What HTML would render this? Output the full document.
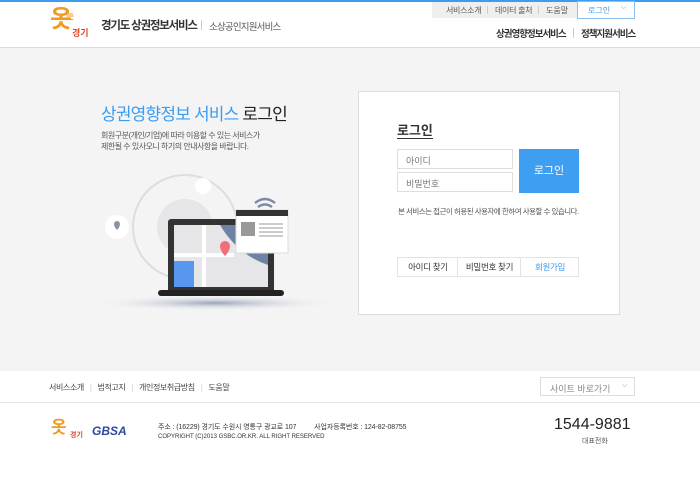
<!DOCTYPE html>
<html><head><meta charset="utf-8"><style>
*{margin:0;padding:0;box-sizing:border-box}
body{width:700px;height:489px;position:relative;background:#fff;font-family:"Liberation Sans","Noto Sans CJK KR",sans-serif;color:#333;overflow:hidden}
.a{position:absolute;white-space:nowrap}
</style></head><body>
<div class="a" style="left:0;top:0;width:700px;height:2px;background:#3b9cf0"></div>
<div class="a" style="left:0;top:47px;width:700px;height:324px;background:#f4f4f5;border-top:1px solid #d8dbe0"></div>
<!-- util -->
<div class="a" style="left:432px;top:2px;width:145px;height:16px;background:#efefef"></div>
<div class="a" style="left:446px;top:5px;font-size:8px;color:#555;letter-spacing:-0.3px">서비스소개</div>
<div class="a" style="left:487px;top:6px;width:1px;height:8px;background:#ccc"></div>
<div class="a" style="left:495px;top:5px;font-size:8px;color:#555;letter-spacing:-0.3px">데이터 출처</div>
<div class="a" style="left:538px;top:6px;width:1px;height:8px;background:#ccc"></div>
<div class="a" style="left:546px;top:5px;font-size:8px;color:#555">도움말</div>
<div class="a" style="left:577px;top:1px;width:58px;height:18px;border:1px solid #8cc0f0;background:#fff"></div>
<div class="a" style="left:588px;top:5px;font-size:8px;color:#3b9cf0">로그인</div>
<div class="a" style="left:621px;top:4px;font-size:7px;color:#3b9cf0">⌵</div>
<!-- logo -->
<div class="a" style="left:50px;top:8px;font-size:24px;font-weight:bold;color:#f39a1e;line-height:24px">옷</div>
<div class="a" style="left:66px;top:9px;font-size:9px;font-weight:bold;color:#f39a1e">는</div>
<div class="a" style="left:72px;top:26px;font-size:9px;font-weight:bold;color:#e0482a">경기</div>
<div class="a" style="left:101px;top:17px;font-size:11.5px;font-weight:bold;color:#333;letter-spacing:-1.2px">경기도 상권정보서비스</div>
<div class="a" style="left:201px;top:20px;width:1px;height:10px;background:#ccc"></div>
<div class="a" style="left:209px;top:19px;font-size:9.5px;color:#555;letter-spacing:-0.8px">소상공인지원서비스</div>
<div class="a" style="left:496px;top:26px;font-size:9.5px;font-weight:bold;color:#333;letter-spacing:-1px">상권영향정보서비스</div>
<div class="a" style="left:573px;top:28px;width:1px;height:10px;background:#ccc"></div>
<div class="a" style="left:581px;top:26px;font-size:9.5px;font-weight:bold;color:#333;letter-spacing:-1px">정책지원서비스</div>
<!-- left -->
<div class="a" style="left:101px;top:100px;font-size:17px;color:#3b9cf0;letter-spacing:-0.8px">상권영향정보 서비스 <span style="color:#222">로그인</span></div>
<div class="a" style="left:101px;top:130px;font-size:8px;color:#555;line-height:11px;letter-spacing:-0.5px">회원구분(개인/기업)에 따라 이용할 수 있는 서비스가<br>제한될 수 있사오니 하기의 안내사항을 바랍니다.</div>
<svg class="a" style="left:90px;top:165px" width="255" height="150">
<defs><radialGradient id="s"><stop offset="0" stop-color="#9aa5b8"/><stop offset="1" stop-color="#f4f4f5" stop-opacity="0"/></radialGradient></defs>
<ellipse cx="125" cy="138" rx="125" ry="8" fill="url(#s)"/>
<circle cx="95" cy="62" r="52" fill="none" stroke="#ddd" stroke-width="2"/>
<circle cx="95" cy="62" r="28" fill="#e6e6e8"/>
<circle cx="27" cy="62" r="12" fill="#fff"/><path d="M27 56a3 3 0 0 1 3 3c0 3-3 6-3 6s-3-3-3-6a3 3 0 0 1 3-3z" fill="#8a94a6"/>
<circle cx="113" cy="21" r="8" fill="#fff"/>
<path d="M165 38q10-8 20 0M168 42q7-5 14 0" stroke="#7d89a8" stroke-width="2.5" fill="none"/>
<rect x="78" y="54" width="106" height="74" rx="3" fill="#333"/>
<rect x="84" y="60" width="94" height="62" fill="#e6e6e8"/>
<path d="M130 60h48v40q-30-10-48-40z" fill="#6f82a6"/>
<path d="M84 96h20v26h-20z" fill="#5897f0"/>
<path d="M84 90h60M114 60v62" stroke="#fff" stroke-width="4"/>
<path d="M135 76a5 5 0 0 1 5 5c0 5-5 10-5 10s-5-5-5-10a5 5 0 0 1 5-5z" fill="#f0707a"/>
<rect x="68" y="125" width="126" height="6" rx="3" fill="#222"/>
<rect x="146" y="45" width="52" height="43" fill="#fff" stroke="#ddd"/>
<rect x="146" y="45" width="52" height="6" fill="#333"/>
<rect x="151" y="57" width="14" height="14" fill="#999"/>
<path d="M169 59h24M169 63h24M169 67h24M169 71h24" stroke="#999"/>
</svg>
<!-- login box -->
<div class="a" style="left:358px;top:91px;width:262px;height:224px;background:#fff;border:1px solid #ddd"></div>
<div class="a" style="left:397px;top:124px;font-size:13px;font-weight:bold;color:#333;border-bottom:1px solid #333;line-height:14px">로그인</div>
<div class="a" style="left:397px;top:149px;width:116px;height:20px;border:1px solid #ddd;background:#fff;font-size:9px;color:#777;padding:4px 0 0 8px">아이디</div>
<div class="a" style="left:397px;top:172px;width:116px;height:20px;border:1px solid #ddd;background:#fff;font-size:9px;color:#777;padding:4px 0 0 8px">비밀번호</div>
<div class="a" style="left:519px;top:149px;width:60px;height:44px;background:#3d9ef2;color:#fff;font-size:11px;text-align:center;line-height:44px">로그인</div>
<div class="a" style="left:398px;top:206px;font-size:7.5px;color:#555;letter-spacing:-0.5px">본 서비스는 접근이 허용된 사용자에 한하여 사용할 수 있습니다.</div>
<div class="a" style="left:397px;top:257px;width:182px;height:20px;border:1px solid #e3e3e3;font-size:8.5px;line-height:18px;letter-spacing:-0.3px">
<span class="a" style="left:0;width:60px;text-align:center">아이디 찾기</span>
<span class="a" style="left:59px;top:0;width:1px;height:18px;background:#e3e3e3"></span>
<span class="a" style="left:60px;width:63px;text-align:center">비밀번호 찾기</span>
<span class="a" style="left:122px;top:0;width:1px;height:18px;background:#e3e3e3"></span>
<span class="a" style="left:123px;width:58px;text-align:center;color:#3b9cf0">회원가입</span></div>
<!-- footer -->
<div class="a" style="left:0;top:402px;width:700px;height:1px;background:#e3e3e3"></div>
<div class="a" style="left:49px;top:382px;font-size:8px;color:#444;letter-spacing:-0.4px">서비스소개<span style="color:#ccc;margin:0 6px">|</span>법적고지<span style="color:#ccc;margin:0 6px">|</span>개인정보취급방침<span style="color:#ccc;margin:0 6px">|</span>도움말</div>
<div class="a" style="left:540px;top:377px;width:95px;height:19px;border:1px solid #ddd;font-size:9px;color:#888;padding:4px 0 0 9px">사이트 바로가기<span class="a" style="left:81px;top:4px;font-size:7px">⌵</span></div>
<div class="a" style="left:51px;top:419px;font-size:17px;font-weight:bold;color:#f39a1e;line-height:18px">옷</div>
<div class="a" style="left:70px;top:430px;font-size:7px;font-weight:bold;color:#e0482a">경기</div>
<div class="a" style="left:92px;top:424px;font-size:12px;font-weight:bold;font-style:italic;color:#2a4aa0">GBSA</div>
<div class="a" style="left:158px;top:422px;font-size:7px;color:#333;letter-spacing:-0.1px">주소 : (16229) 경기도 수원시 영통구 광교로 107 <span style="margin-left:16px">사업자등록번호 : 124-82-08755</span></div>
<div class="a" style="left:158px;top:434px;font-size:6px;color:#333">COPYRIGHT (C)2013 GSBC.OR.KR. ALL RIGHT RESERVED</div>
<div class="a" style="left:554px;top:416px;font-size:16px;color:#222">1544-9881</div>
<div class="a" style="left:582px;top:436px;font-size:7px;color:#555">대표전화</div>
</body></html>
